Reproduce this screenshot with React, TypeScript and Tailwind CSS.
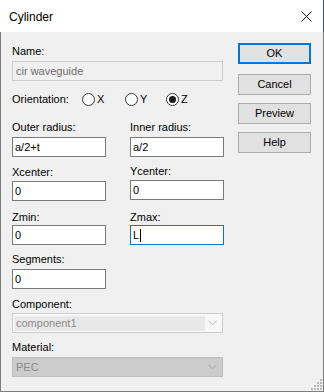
import React from "react";

const font = { fontFamily: '"Liberation Sans", Arial, sans-serif' };

function Label({ children, mt }: { children: React.ReactNode; mt: string }) {
  return <div className={`h-[13px] leading-[13px] text-[11px] text-black ${mt}`}>{children}</div>;
}

function TextBox({ value, mt, focused, caret }: { value: string; mt: string; focused?: boolean; caret?: boolean }) {
  return (
    <div
      className={`h-[20px] w-[94px] bg-white border flex items-center pl-[2px] text-[11px] text-black ${mt} ${
        focused ? "border-[#0078d7]" : "border-[#7a7a7a]"
      }`}
    >
      <span>{value}</span>
      {caret && <span className="inline-block w-px h-[13px] bg-black ml-px" />}
    </div>
  );
}

function Chevron({ color }: { color: string }) {
  return (
    <svg width="9" height="6" viewBox="0 0 9 6" className="mr-[5px]">
      <path d="M0.5 0.8 L4.5 4.8 L8.5 0.8" fill="none" stroke={color} strokeWidth="1" />
    </svg>
  );
}

function Radio({ label, checked }: { label: string; checked?: boolean }) {
  return (
    <div className="flex items-center h-[13px]">
      <div className="w-[13px] h-[13px] rounded-full border border-[#333333] bg-white flex items-center justify-center">
        {checked && <div className="w-[7px] h-[7px] rounded-full bg-[#1a1a1a]" />}
      </div>
      <span className="ml-[2px] text-[11px] leading-[13px] text-black">{label}</span>
    </div>
  );
}

function Button({ label, primary, mt }: { label: string; primary?: boolean; mt: string }) {
  return (
    <div
      className={`h-[21px] w-[73px] bg-[#e1e1e1] flex items-center justify-center text-[11px] text-black ${mt} ${
        primary ? "border-2 border-[#0078d7]" : "border border-[#adadad]"
      }`}
    >
      {label}
    </div>
  );
}

function Grip() {
  const dots: [number, number][] = [];
  for (let r = 0; r < 4; r++) {
    for (let c = 0; c <= r; c++) {
      dots.push([9 - c * 3 + 0, 9 - (r - c) * 3]);
    }
  }
  return (
    <svg width="12" height="12" viewBox="0 0 12 12" className="absolute right-0 bottom-0">
      {dots.map(([x, y], i) => (
        <rect key={i} x={x} y={y} width="2" height="2" fill="#b8b8b8" />
      ))}
    </svg>
  );
}

export default function App() {
  return (
    <div className="w-[324px] h-[392px] flex flex-col bg-[#f0f0f0] select-none" style={font}>
      {/* Title bar */}
      <div className="h-[32px] bg-white flex items-center justify-between border-r border-[#3d5670]">
        <span className="ml-[9px] text-[12px] text-black leading-none mt-[2px]">Cylinder</span>
        <svg width="11" height="11" viewBox="0 0 11 11" className="mr-[11px] mt-[1px]">
          <path d="M0.5 0.5 L10.5 10.5 M10.5 0.5 L0.5 10.5" stroke="#111" strokeWidth="1" />
        </svg>
      </div>
      {/* Body */}
      <div className="relative flex-1 flex border-l border-r border-b border-[#7d7d7d]">
        {/* Left column */}
        <div className="w-[223px] pl-[11px] pt-[13px] flex flex-col">
          <Label mt="">Name:</Label>
          <div className="mt-[3px] h-[20px] w-[211px] border border-[#cccccc] bg-[#f0f0f0] flex items-center pl-[3px] text-[11px] text-[#6d6d6d]">
            cir waveguide
          </div>
          <div className="mt-[12px] h-[13px] flex items-center">
            <span className="w-[70px] text-[11px] leading-[13px] text-black">Orientation:</span>
            <div className="w-[43px]">
              <Radio label="X" />
            </div>
            <div className="w-[41px]">
              <Radio label="Y" />
            </div>
            <Radio label="Z" checked />
          </div>
          <div className="grid grid-cols-[118px_94px]">
            <div className="flex flex-col">
              <Label mt="mt-[15px]">Outer radius:</Label>
              <TextBox value="a/2+t" mt="mt-[3px]" />
              <Label mt="mt-[9px]">Xcenter:</Label>
              <TextBox value="0" mt="mt-[2px]" />
              <Label mt="mt-[10px]">Zmin:</Label>
              <TextBox value="0" mt="mt-px" />
            </div>
            <div className="flex flex-col">
              <Label mt="mt-[15px]">Inner radius:</Label>
              <TextBox value="a/2" mt="mt-[3px]" />
              <Label mt="mt-[8px]">Ycenter:</Label>
              <TextBox value="0" mt="mt-[2px]" />
              <Label mt="mt-[11px]">Zmax:</Label>
              <TextBox value="L" mt="mt-px" focused caret />
            </div>
          </div>
          <Label mt="mt-[8px]">Segments:</Label>
          <TextBox value="0" mt="mt-[3px]" />
          <Label mt="mt-[9px]">Component:</Label>
          <div className="mt-[2px] h-[20px] w-[211px] border border-[#cccccc] bg-[#f7f7f7] flex items-center justify-between">
            <div className="ml-[2px] h-[15px] w-[190px] bg-[#e8e8e8] flex items-center pl-[1px] text-[11px] text-[#8a8a8a]">
              component1
            </div>
            <Chevron color="#b0b0b0" />
          </div>
          <Label mt="mt-[8px]">Material:</Label>
          <div className="mt-[3px] h-[20px] w-[211px] border border-[#bfbfbf] bg-[#cccccc] flex items-center justify-between">
            <span className="ml-[3px] text-[11px] text-[#8a8a8a]">PEC</span>
            <Chevron color="#a0a0a0" />
          </div>
        </div>
        {/* Right column */}
        <div className="ml-[14px] pt-[11px] flex flex-col">
          <Button label="OK" primary mt="" />
          <Button label="Cancel" mt="mt-[10px]" />
          <Button label="Preview" mt="mt-[8px]" />
          <Button label="Help" mt="mt-[8px]" />
        </div>
        <Grip />
      </div>
    </div>
  );
}
